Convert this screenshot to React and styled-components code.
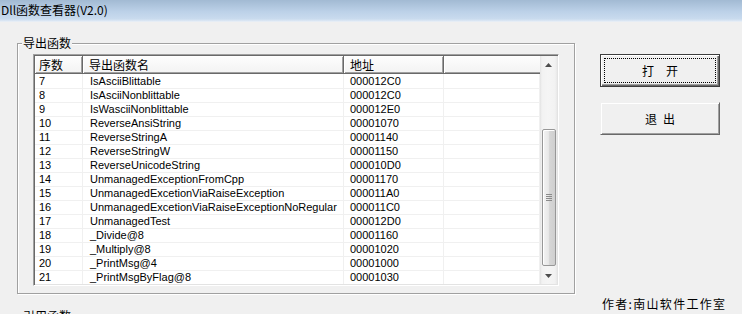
import React from "react";
import styled, { createGlobalStyle } from "styled-components";

const Global = createGlobalStyle`
  html, body { margin: 0; padding: 0; background: #f0f0f0; overflow: hidden; }
  * { box-sizing: border-box; }
`;

const Window = styled.div`
  width: 742px;
  height: 314px;
  display: flex;
  flex-direction: column;
  background: #f0f0f0;
  font-family: "Noto Sans CJK SC", "Liberation Sans", sans-serif;
  overflow: hidden;
`;

const TitleBar = styled.div`
  height: 22px;
  flex: none;
  display: flex;
  align-items: center;
  padding: 0 0 1px 1px;
  background: linear-gradient(#a2bad3 0%, #bcd1e8 55%, #c9dbee 90%, #dde8f4 100%);
  border-bottom: 1px solid #e6edf5;
  font-size: 12px;
  line-height: 14px;
  color: #000;
`;

const Body = styled.div`
  flex: 1;
  display: flex;
  align-items: flex-start;
  padding-left: 17px;
`;

const LeftColumn = styled.div`
  display: flex;
  flex-direction: column;
  width: 558px;
  padding-top: 21px;
`;

const GroupBox = styled.div`
  position: relative;
  width: 558px;
  height: ${(p) => p.$height}px;
  margin-top: ${(p) => p.$top || 0}px;
  border: 1px solid #a0a0a0;
  box-shadow: inset 1px 1px 0 #fff, 1px 1px 0 #fff;
  padding: 10px 15px 7px 15px;
`;

const Legend = styled.span`
  position: absolute;
  top: -8px;
  left: 4px;
  padding: 0 1px;
  background: #f0f0f0;
  font-size: 12px;
  line-height: 14px;
  color: #000;
`;

const ListView = styled.div`
  width: 526px;
  height: 232px;
  display: flex;
  border-top: 1px solid #a0a0a0;
  border-left: 1px solid #a0a0a0;
  border-right: 1px solid #fff;
  border-bottom: 1px solid #fff;
  box-shadow: inset 1px 1px 0 #696969, inset -1px -1px 0 #e3e3e3;
  padding: 1px;
  background: #fff;
`;

const Table = styled.div`
  flex: 1;
  display: flex;
  flex-direction: column;
  background: #fff;
  overflow: hidden;
`;

const cols = "48px 261px 100px 1fr";

const HeaderRow = styled.div`
  display: grid;
  grid-template-columns: ${cols};
  height: 18px;
  flex: none;
`;

const HeaderCell = styled.div`
  height: 18px;
  padding-left: ${(p) => p.$pad}px;
  padding-top: 1px;
  background: linear-gradient(#fdfdfd, #f3f3f3);
  border-right: 1px solid #696969;
  border-bottom: 1px solid #696969;
  box-shadow: inset 1px 1px 0 #fff, inset -1px -1px 0 #a0a0a0;
  font-size: 12px;
  line-height: 16px;
  color: #000;
  white-space: nowrap;
  &:last-child { border-right: none; box-shadow: inset 1px 1px 0 #fff, inset 0 -1px 0 #a0a0a0; }
`;

const Row = styled.div`
  display: grid;
  grid-template-columns: ${cols};
  height: 14px;
  flex: none;
`;

const Cell = styled.div`
  height: 14px;
  padding-left: ${(p) => p.$pad}px;
  border-right: 1px solid #f0f0f0;
  border-top: ${(p) => (p.$first ? "0" : "1px solid #f0f0f0")};
  padding-top: ${(p) => (p.$first ? "1px" : "0")};
  font-family: "Liberation Sans", Arial, sans-serif;
  font-size: 11px;
  line-height: 13px;
  color: #000;
  white-space: nowrap;
  overflow: hidden;
`;

const ScrollBar = styled.div`
  width: 17px;
  flex: none;
  display: flex;
  flex-direction: column;
  background: linear-gradient(90deg, #e3e3e3 0, #f2f2f2 2px, #f5f5f5 8px, #f2f2f2 15px, #e8e8e8 17px);
`;

const ArrowButton = styled.div`
  height: 17px;
  flex: none;
  display: flex;
  align-items: center;
  justify-content: center;
`;

const Track = styled.div`
  flex: 1;
  display: flex;
  flex-direction: column;
  padding: 56px 1px 1px 2px;
`;

const Thumb = styled.div`
  height: 137px;
  border: 1px solid #979797;
  border-radius: 2px;
  background: linear-gradient(90deg, #f3f3f3 0%, #e8e8e8 45%, #d6d6d6 55%, #cfcfcf 100%);
  box-shadow: inset 1px 1px 0 #fff;
  display: flex;
  align-items: center;
  justify-content: center;
`;

const RightColumn = styled.div`
  display: flex;
  flex-direction: column;
  align-items: flex-start;
  margin-left: 25px;
  padding-top: 32px;
  width: 132px;
`;

const Button = styled.button`
  width: 120px;
  height: 33px;
  margin-bottom: 15px;
  position: relative;
  background: #f0f0f0;
  font-family: "Noto Sans CJK SC", sans-serif;
  font-size: 12px;
  color: #000;
  letter-spacing: ${(p) => p.$spacing}px;
  padding: 0 0 0 ${(p) => p.$spacing}px;
  border: 1px solid ${(p) => (p.$default ? "#3c3c3c" : "#f0f0f0")};
  border-right-color: ${(p) => (p.$default ? "#3c3c3c" : "#696969")};
  border-bottom-color: ${(p) => (p.$default ? "#3c3c3c" : "#696969")};
  box-shadow: ${(p) =>
    p.$default
      ? "inset 1px 1px 0 #fff, inset -1px -1px 0 #696969, inset -2px -2px 0 #a0a0a0"
      : "inset 1px 1px 0 #fff, inset -1px -1px 0 #a0a0a0"};
  cursor: default;
  &::after {
    content: "";
    display: ${(p) => (p.$default ? "block" : "none")};
    position: absolute;
    inset: 3px;
    border: 1px dotted #000;
  }
`;

const Author = styled.div`
  margin-top: 147px;
  margin-left: 2px;
  font-size: 12px;
  line-height: 14px;
  letter-spacing: 1.3px;
  color: #000;
  white-space: nowrap;
`;

const rows = [
  ["7", "IsAsciiBlittable", "000012C0"],
  ["8", "IsAsciiNonblittable", "000012C0"],
  ["9", "IsWasciiNonblittable", "000012E0"],
  ["10", "ReverseAnsiString", "00001070"],
  ["11", "ReverseStringA", "00001140"],
  ["12", "ReverseStringW", "00001150"],
  ["13", "ReverseUnicodeString", "000010D0"],
  ["14", "UnmanagedExceptionFromCpp", "00001170"],
  ["15", "UnmanagedExcetionViaRaiseException", "000011A0"],
  ["16", "UnmanagedExcetionViaRaiseExceptionNoRegular", "000011C0"],
  ["17", "UnmanagedTest", "000012D0"],
  ["18", "_Divide@8", "00001160"],
  ["19", "_Multiply@8", "00001020"],
  ["20", "_PrintMsg@4", "00001000"],
  ["21", "_PrintMsgByFlag@8", "00001030"],
];

const Arrow = ({ down }) => (
  <svg width="7" height="4" viewBox="0 0 7 4">
    <path d={down ? "M0 0 H7 L3.5 4 Z" : "M3.5 0 L7 4 H0 Z"} fill="#4d4d4d" />
  </svg>
);

const Grip = () => (
  <svg width="7" height="7" viewBox="0 0 7 7">
    {[0, 2, 4, 6].map((y) => (
      <rect key={y} x="0" y={y} width="6" height="1" fill="#8a8a8a" />
    ))}
  </svg>
);

export default function App() {
  return (
    <Window>
      <Global />
      <TitleBar>Dll函数查看器(V2.0)</TitleBar>
      <Body>
        <LeftColumn>
          <GroupBox $height={251}>
            <Legend>导出函数</Legend>
            <ListView>
              <Table>
                <HeaderRow>
                  <HeaderCell $pad={4}>序数</HeaderCell>
                  <HeaderCell $pad={6}>导出函数名</HeaderCell>
                  <HeaderCell $pad={6}>地址</HeaderCell>
                  <HeaderCell $pad={6} />
                </HeaderRow>
                {rows.map(([n, name, addr], i) => (
                  <Row key={n}>
                    <Cell $pad={4} $first={i === 0}>{n}</Cell>
                    <Cell $pad={7} $first={i === 0}>{name}</Cell>
                    <Cell $pad={6} $first={i === 0}>{addr}</Cell>
                    <Cell $pad={6} $first={i === 0} />
                  </Row>
                ))}
              </Table>
              <ScrollBar>
                <ArrowButton>
                  <Arrow />
                </ArrowButton>
                <Track>
                  <Thumb>
                    <Grip />
                  </Thumb>
                </Track>
                <ArrowButton>
                  <Arrow down />
                </ArrowButton>
              </ScrollBar>
            </ListView>
          </GroupBox>
          <GroupBox $height={80} $top={22}>
            <Legend>引用函数</Legend>
          </GroupBox>
        </LeftColumn>
        <RightColumn>
          <Button $default $spacing={12}>打开</Button>
          <Button $spacing={6}>退出</Button>
          <Author>作者:南山软件工作室</Author>
        </RightColumn>
      </Body>
    </Window>
  );
}
